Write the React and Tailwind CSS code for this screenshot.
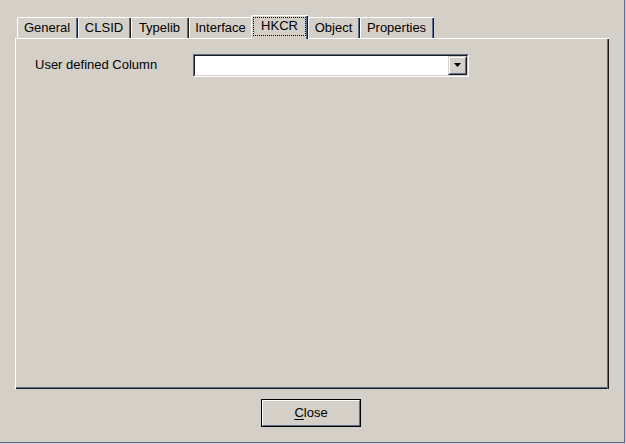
import React from 'react';

const tabs = [
  { label: 'General', w: 'w-[61px]' },
  { label: 'CLSID', w: 'w-[53px]' },
  { label: 'Typelib', w: 'w-[58px]' },
  { label: 'Interface', w: 'w-[64px]' },
  { label: 'HKCR', w: 'w-[57px]', active: true },
  { label: 'Object', w: 'w-[52px]' },
  { label: 'Properties', w: 'w-[74px]' },
];

const Tab = ({ label, w, active }) => {
  if (active) {
    return (
      <div
        className={`relative z-10 -ml-[2px] -mb-px h-[24px] ${w} bg-[#d4d0c8] border-t border-l border-white rounded-tl-[2px] flex`}
      >
        <div className="flex-1 pt-[1px] pl-[1px] pb-[3px]">
          <div className="h-full border border-dotted border-black flex items-center justify-center pb-[2px]">
            {label}
          </div>
        </div>
        <div className="w-[2px] h-full flex">
          <div className="w-px bg-[#5a6e94]"></div>
          <div className="w-px bg-[#1c1c1c]"></div>
        </div>
      </div>
    );
  }
  return (
    <div className={`h-[21px] ${w} border-t border-l border-white rounded-tl-[2px] flex`}>
      <div className="flex-1 flex items-center justify-center pb-[1px]">{label}</div>
      <div className="w-[2px] h-full flex">
        <div className="w-px bg-[#5a6e94]"></div>
        <div className="w-px bg-[#1c1c1c]"></div>
      </div>
    </div>
  );
};

const App = () => {
  return (
    <div
      className="w-[626px] h-[444px] bg-[#d4d0c8] text-[13px] text-black overflow-hidden"
      style={{ fontFamily: '"Liberation Sans", Arial, sans-serif' }}
    >
      <div className="w-[625px] h-[443px] border-r border-b border-[#5a6e94] pl-[15px] pt-[15px] flex flex-col">
        {/* Tab strip */}
        <div className="h-[23px] flex items-end pl-[2px]">
          {tabs.map((t) => (
            <Tab key={t.label} {...t} />
          ))}
        </div>

        {/* Panel */}
        <div className="w-[594px] h-[351px] flex border-t border-l border-white">
          <div className="flex-1 flex flex-col">
            <div className="flex-1 flex items-start pt-[15px] pl-[19px]">
              <div className="w-[158px] mt-[3px] leading-[15px]">User defined Column</div>
              <div className="w-[276px] h-[23px] border-t border-l border-[#5a6e94] border-r border-b border-r-white border-b-white">
                <div className="h-full border-t border-l border-[#1c1c1c] border-r border-b border-r-[#d4d0c8] border-b-[#d4d0c8] bg-white flex justify-end">
                  <div className="w-[19px] h-full border-t border-l border-[#d4d0c8] border-r border-b border-r-[#1c1c1c] border-b-[#1c1c1c]">
                    <div className="w-full h-full bg-[#d4d0c8] border-t border-l border-white border-r border-b border-r-[#5a6e94] border-b-[#5a6e94] flex items-center justify-center">
                      <svg width="8" height="5" viewBox="0 0 8 5">
                        <path d="M0 0 H7 L3.5 4 Z" fill="#000" />
                      </svg>
                    </div>
                  </div>
                </div>
              </div>
            </div>
            <div className="h-px bg-[#5a6e94]"></div>
            <div className="h-px bg-[#1c1c1c]"></div>
          </div>
          <div className="w-[2px] flex">
            <div className="w-px bg-[#5a6e94]"></div>
            <div className="w-px bg-[#1c1c1c]"></div>
          </div>
        </div>

        {/* Buttons */}
        <div className="flex pt-[10px] pl-[246px]">
          <div className="w-[100px] h-[28px] border border-black">
            <div className="w-full h-full border-t border-l border-white border-r border-b border-r-[#5a6e94] border-b-[#5a6e94] flex items-center justify-center">
              <span>
                <span className="underline underline-offset-2">C</span>lose
              </span>
            </div>
          </div>
        </div>
      </div>
    </div>
  );
};

export default App;
